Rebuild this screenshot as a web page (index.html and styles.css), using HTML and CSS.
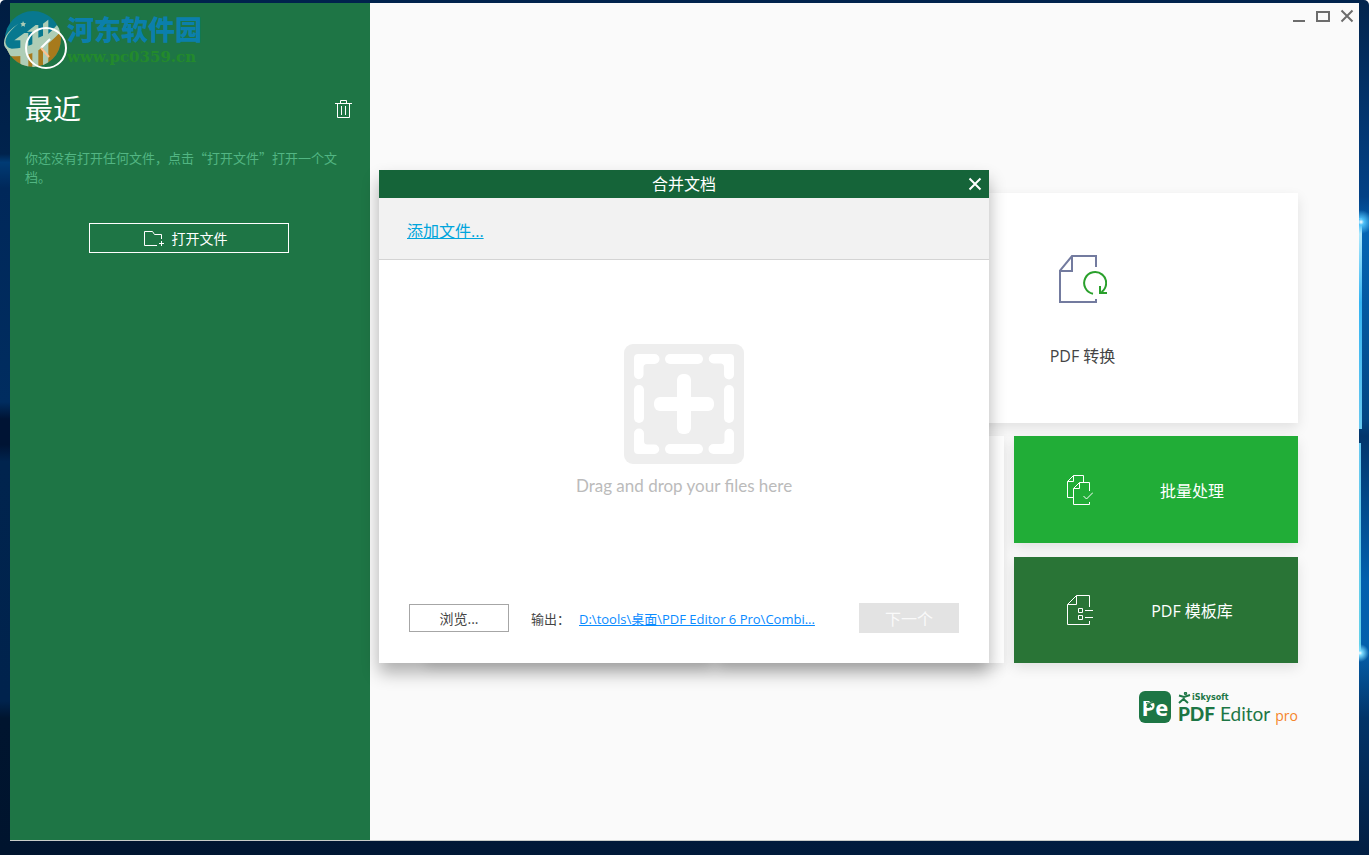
FILE: index.html
```html
<!DOCTYPE html>
<html lang="zh-CN">
<head>
<meta charset="utf-8">
<meta name="viewport" content="width=device-width, initial-scale=1">
<title>iSkysoft PDF Editor 6 Pro</title>
<link rel="stylesheet" href="styles.css">
</head>
<body>
<div class="desktop">
  <div class="app">
    <aside class="sidebar">
      <button class="back" type="button" aria-label="返回">
        <svg width="42" height="42" viewBox="0 0 42 42" fill="none" stroke="#fff" stroke-width="2">
          <circle cx="21" cy="21" r="20"/>
          <path d="M25 12L16 21"/>
          <path d="M16 21l8 9" stroke="#fcc18f"/>
        </svg>
      </button>
      <div class="recent-head">
        <h1>最近</h1>
        <button class="trash" type="button" aria-label="清空">
          <svg width="17" height="18" viewBox="0 0 17 18" fill="none" stroke="#fff">
            <path d="M0 3.5H17M5.5 3.5V.5H11.5V3.5M2.5 3.5V17.5H14.5V3.5M6.5 6V15M10.5 6V15"/>
          </svg>
        </button>
      </div>
      <p class="recent-empty">你还没有打开任何文件，点击“打开文件”打开一个文档。</p>
      <button class="open-file" type="button">
        <svg width="20" height="15" viewBox="0 0 20 15" fill="none" stroke="#fff">
          <path d="M13 14.5H.5V.5H8.5L10.5 3.5H17.5V8M17.5 10V15M15 12.5H20"/>
        </svg>
        <span>打开文件</span>
      </button>
    </aside>

    <main class="main">
      <div class="window-controls">
        <button type="button" aria-label="最小化"><svg width="14" height="14" viewBox="0 0 14 14"><path d="M1 12H13" stroke="#6c6c6c" stroke-width="2"/></svg></button>
        <button type="button" aria-label="最大化"><svg width="14" height="14" viewBox="0 0 14 14"><path d="M1 3H13V12H1Z" fill="none" stroke="#6c6c6c" stroke-width="2"/></svg></button>
        <button type="button" aria-label="关闭"><svg width="14" height="14" viewBox="0 0 14 14"><path d="M1.500 1.500L12.500 12.500M12.500 1.500L1.500 12.500" stroke="#6c6c6c" stroke-width="2"/></svg></button>
      </div>

      <div class="home">
        <div class="row-large">
          <div class="card"></div>
          <button class="card card-convert" type="button">
            <svg width="48" height="49" viewBox="0 0 48 49" fill="none" stroke="#737b9f" stroke-width="2">
              <path d="M37 12V1H13L1 15.500V47H37V44M13 1V16H1"/>
              <path d="M34 38.800A11 11 0 1 1 42.500 37M41 31V38H48" stroke="#2aa02c"/>
            </svg>
            <span>PDF 转换</span>
          </button>
        </div>
        <div class="row-small">
          <div class="card"></div>
          <div class="card"></div>
          <div class="tiles">
            <button class="tile tile-batch" type="button">
              <svg width="26" height="30" viewBox="0 0 26 30" fill="none" stroke="#fff">
                <path d="M16.500 7V.5H6.500L.5 6.500V22.500H6M6.500 .5V6.500H.5"/>
                <path d="M22.500 16V7.500H12.500L6.500 13.500V29.500H22.500V27M12.500 7.500V13.500H6.500"/>
                <path d="M16.500 21L19.500 24L26 17.500"/>
              </svg>
              <span>批量处理</span>
            </button>
            <button class="tile tile-template" type="button">
              <svg width="26" height="30" viewBox="0 0 26 30" fill="none" stroke="#fff">
                <path d="M22.500 12V.5H9.500L.5 9.500V29.500H22.500V26M9.500 .5V9.500H.5"/>
                <path d="M11.500 13.500H15.500V17.500H11.500ZM11.500 20.500H15.500V24.500H11.500ZM18 15.500H26M18 22.500H26"/>
              </svg>
              <span>PDF 模板库</span>
            </button>
          </div>
        </div>
        <div class="brand">
          <span class="brand-mark">Pe<svg width="8" height="8" viewBox="0 0 12 12" stroke="#1d7645" stroke-width="2" fill="none"><circle cx="7" cy="1.500" r="1"/><path d="M0 4L6 5L12 3M6 4.500L5 7L1 11M5 7L9 11"/></svg></span>
          <div class="brand-text">
            <div class="brand-maker"><svg width="13" height="12" viewBox="0 0 13 12" stroke="#1d7645" stroke-width="2" fill="none"><circle cx="7.500" cy="1.500" r=".7"/><path d="M1 3.500L6 5L12 3M6.500 4.500L5.500 7L1 11M5.500 7L10 11"/></svg><span>iSkysoft</span></div>
            <div class="brand-product"><b>PDF</b><span>Editor</span><em>pro</em></div>
          </div>
        </div>
      </div>
    </main>
  </div>

  <div class="watermark">
    <svg width="66" height="60" viewBox="0 0 198 180">
      <defs><clipPath id="disc"><circle cx="96" cy="84" r="84"/></clipPath></defs>
      <g clip-path="url(#disc)">
        <path d="M0 0H198V180H0Z" fill="#08788f"/>
        <path d="M12 112Q100 136 184 50V180H12Z" fill="#a77a1c"/>
        <path d="M58 168V88H40L70 66H82V168ZM94 168V62H78L104 42H112V80L126 74V38L142 26V168H126V104L112 112V168Z" fill="#aecdb6"/>
        <path d="M12 112Q100 122 168 42L184 56Q104 148 24 134Z" fill="#aecdb6"/>
        <path d="M66 30l3 6 6 1-4 4 1 6-6-3-5 3 1-6-4-4 6-1Z" fill="#aecdb6"/>
      </g>
      <path d="M52 38Q0 80 18 106Q28 118 58 116Q22 132 10 104Q2 72 52 38Z" fill="#aecdb6"/>
    </svg>
    <div class="watermark-text">
      <strong>河东软件园</strong>
      <span>www.pc0359.cn</span>
    </div>
  </div>

  <div class="overlay">
    <section class="dialog" role="dialog" aria-labelledby="dialog-title">
      <header class="dialog-head">
        <h2 id="dialog-title">合并文档</h2>
        <button class="dialog-close" type="button" aria-label="关闭"><svg width="14" height="14" viewBox="0 0 14 14"><path d="M1.500 1.500L12.500 12.500M12.500 1.500L1.500 12.500" stroke="#fff" stroke-width="2"/></svg></button>
      </header>
      <div class="dialog-tools"><a href="#add">添加文件...</a></div>
      <div class="drop">
        <svg width="120" height="120" viewBox="0 0 120 120">
          <defs><path id="corner" d="M14 10H30.500a5 5 0 0 1 0 10H23a3.500 3.500 0 0 0-3.500 3.500V30.500a4.750 4.750 0 0 1-9.500 0V14a4 4 0 0 1 4-4Z"/></defs>
          <rect width="120" height="120" rx="9" fill="#eee"/>
          <g fill="#fff">
            <use href="#corner"/>
            <use href="#corner" transform="rotate(90 60 60)"/>
            <use href="#corner" transform="rotate(180 60 60)"/>
            <use href="#corner" transform="rotate(270 60 60)"/>
            <rect x="41" y="10" width="38" height="10" rx="5"/>
            <rect x="41" y="100" width="38" height="10" rx="5"/>
            <rect x="10" y="41" width="10" height="38" rx="5"/>
            <rect x="100" y="41" width="10" height="38" rx="5"/>
            <rect x="53" y="30" width="14" height="60" rx="6"/>
            <rect x="30" y="53" width="60" height="14" rx="6"/>
          </g>
        </svg>
        <p>Drag and drop your files here</p>
      </div>
      <footer class="dialog-foot">
        <button class="browse" type="button">浏览...</button>
        <span class="output-label">输出：</span>
        <a class="output-path" href="#output">D:\tools\桌面\PDF Editor 6 Pro\Combi...</a>
        <button class="next" type="button" disabled>下一个</button>
      </footer>
    </section>
  </div>
</div>
</body>
</html>
```
FILE: styles.css
```css
* {
  box-sizing: border-box;
}

body {
  margin: 0;
  background: #fff;
  font-family: "Open Sans", "Noto Sans CJK SC", sans-serif;
  color: #444;
}

h1, h2, p {
  margin: 0;
  font-weight: 400;
}

button {
  margin: 0;
  padding: 0;
  border: 0;
  background: none;
  color: inherit;
  font: inherit;
}

svg {
  display: block;
  flex: none;
}

/* Desktop wallpaper: dark blue edges with a light beam on the right */
.desktop {
  position: relative;
  display: flex;
  min-height: 100vh;
  padding: 3px 10px 14px;
  border-radius: 5px 5px 0 0;
  background:
    radial-gradient(circle 9px at calc(100% - 9px) 653px, #fff 0, #7bdcff 25%, transparent 100%),
    radial-gradient(circle 12px at calc(100% - 8px) 222px, #fff 0, #4dc0f8 25%, transparent 100%),
    linear-gradient(#c8f4ff, #35b4f2 40%, #68c8ef) right 7px top 218px / 3px 211px no-repeat,
    linear-gradient(#68c8ef, #62d0e8) right 8px top 443px / 2px 212px no-repeat,
    linear-gradient(#02244c, #024186 23%, #0465b4 27%, #024684 49%, #02366c 51%, #0260ae 68%, #0460ac 76%, #023468 84%, #021e42) right top / 10px 100% no-repeat,
    linear-gradient(#001d42, #00234d 18%, #003b74 19%, #00285a 22%, #002d60 47%, #001434 49%, #001434 52%, #00244e 54%, #00234d 82%, #00152f 84%, #00142e) left top / 10px 100% no-repeat,
    linear-gradient(90deg, #00142e, #001f45) left bottom / 100% 15px no-repeat,
    #00234d;
}

.app {
  display: flex;
  flex: 1;
  border-bottom: 1px solid #c8ccc9;
  background: #fafafa;
}

/* Sidebar */
.sidebar {
  display: flex;
  flex: none;
  flex-direction: column;
  width: 360px;
  padding: 24px 18px 24px 15px;
  background: #1e7545;
  color: #fff;
}

.back {
  z-index: 2;
  align-self: flex-start;
}

.recent-head {
  display: flex;
  align-items: center;
  justify-content: space-between;
  margin-top: 20px;
}

.recent-head h1 {
  font-size: 28px;
  line-height: 40px;
}

.recent-empty {
  margin-top: 19px;
  padding-right: 10px;
  font-family: "Noto Sans CJK SC", sans-serif;
  font-size: 13px;
  line-height: 19px;
  color: #52b683;
}

.open-file {
  display: flex;
  align-items: center;
  align-self: center;
  justify-content: center;
  gap: 8px;
  width: 200px;
  height: 30px;
  margin-top: 37px;
  padding-right: 6px;
  border: 1px solid #fff;
  font-size: 14px;
}

/* Main area */
.main {
  display: flex;
  flex: 1;
  flex-direction: column;
  min-width: 0;
}

.window-controls {
  display: flex;
  justify-content: flex-end;
  gap: 10px;
  padding: 6px 5px 0;
}

.home {
  display: flex;
  flex-direction: column;
  gap: 13px;
  padding: 170px 61px 0 56px;
}

.row-large,
.row-small {
  display: grid;
  gap: 10px;
}

.row-large {
  grid-template-columns: 1fr 1fr;
}

.row-small {
  grid-template-columns: 1fr 1fr 1fr;
}

.card,
.tile {
  box-shadow: 0 5px 12px rgba(0, 0, 0, 0.1);
}

.card {
  background: #fff;
}

.card-convert {
  display: flex;
  flex-direction: column;
  align-items: center;
  gap: 40px;
  min-height: 230px;
  padding-top: 62px;
  font-size: 16px;
  line-height: 24px;
}

.tiles {
  display: flex;
  flex-direction: column;
  gap: 14px;
}

.tile {
  display: flex;
  align-items: center;
  gap: 14px;
  height: 107px;
  padding: 0 21px 0 53px;
  font-size: 16px;
  color: #fff;
}

.tile span {
  flex: 1;
  text-align: center;
}

.tile-batch {
  background: #21ad37;
}

.tile-template {
  height: 106px;
  background: #297436;
}

.brand {
  display: flex;
  align-self: flex-end;
  gap: 7px;
  margin-top: 15px;
  color: #1d7645;
}

.brand-mark {
  position: relative;
  width: 32px;
  height: 32px;
  border-radius: 6px;
  background: #1d7645;
  color: #fff;
  font: 700 22px/32px "Open Sans", sans-serif;
  text-align: center;
}

.brand-mark svg {
  position: absolute;
  left: 7px;
  top: 9px;
}

.brand-maker {
  display: flex;
  align-items: center;
  gap: 1px;
  height: 14px;
  font: 700 8px/14px "DejaVu Sans", sans-serif;
}

.brand-product {
  display: flex;
  align-items: baseline;
  gap: 5px;
  font: 400 19px/18px Lato, sans-serif;
}

.brand-product b {
  font-weight: 900;
}

.brand-product em {
  font: 400 14px/18px "Open Sans", sans-serif;
  color: #f5852b;
}

/* Site watermark */
.watermark {
  position: absolute;
  left: 1px;
  top: 11px;
  display: flex;
  pointer-events: none;
}

.watermark-text {
  display: flex;
  flex-direction: column;
}

.watermark-text strong {
  font: 900 27px/36px "Noto Sans CJK SC", sans-serif;
  color: #0b7fac;
}

.watermark-text span {
  font: 700 15px/20px "DejaVu Serif", serif;
  color: #238a2c;
}

/* Merge dialog */
.overlay {
  position: absolute;
  inset: 0;
  z-index: 3;
  display: flex;
  align-items: center;
  justify-content: center;
  padding: 0 1px 22px 0;
}

.dialog {
  width: 610px;
  background: #fff;
  box-shadow: 0 10px 16px rgba(0, 0, 0, 0.3);
}

.dialog-head {
  display: grid;
  grid-template-columns: 28px 1fr 28px;
  align-items: center;
  background: #156439;
  color: #fff;
}

.dialog-head h2 {
  grid-column: 2;
  font-size: 16px;
  line-height: 28px;
  text-align: center;
}

.dialog-close {
  justify-self: center;
}

.dialog-tools {
  padding: 21px 28px 16px;
  border-bottom: 1px solid #d4d4d4;
  background: #f2f2f2;
  font-size: 16px;
  line-height: 24px;
}

.dialog-tools a {
  color: #00a5dc;
}

.drop {
  display: flex;
  flex-direction: column;
  align-items: center;
  gap: 10px;
  padding: 84px 0 105px;
}

.drop p {
  font: 400 17px/24px Lato, sans-serif;
  color: #bbb;
}

.dialog-foot {
  display: flex;
  align-items: center;
  padding: 0 30px 30px;
  font-size: 13px;
}

.browse {
  width: 100px;
  height: 28px;
  border: 1px solid #a6a6a6;
  font-size: 14px;
}

.output-label {
  margin: 0 9px 0 22px;
}

.output-path {
  color: #0a8bff;
}

.next {
  width: 100px;
  height: 30px;
  margin-left: auto;
  background: #e3e3e3;
  color: #fafafa;
  font-size: 16px;
}
```
